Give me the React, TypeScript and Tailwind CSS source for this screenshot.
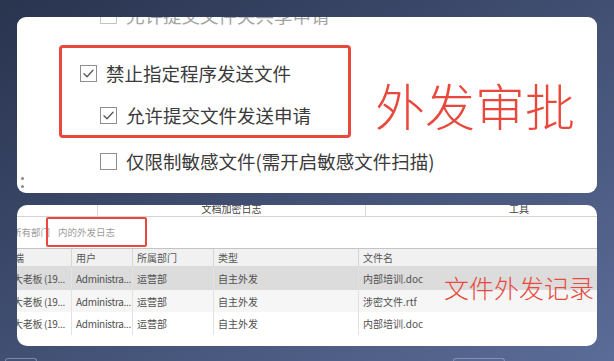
import React from 'react';

const Check: React.FC<{ checked?: boolean; light?: boolean }> = ({ checked, light }) => (
  <span
    className={`flex h-[17px] w-[17px] shrink-0 items-center justify-center border bg-white ${
      light ? 'border-[#c4c4c4]' : 'border-[#8e8e8e]'
    }`}
  >
    {checked && (
      <svg width="13" height="13" viewBox="0 0 13 13" fill="none">
        <path d="M2 6.8 L5 9.8 L11 3.2" stroke="#5c5c5c" strokeWidth="1.4" strokeLinecap="round" strokeLinejoin="round" />
      </svg>
    )}
  </span>
);

const OptionRow: React.FC<{ label: string; checked?: boolean; light?: boolean; className?: string }> = ({
  label,
  checked,
  light,
  className = '',
}) => (
  <div className={`flex h-[30px] items-center gap-[9px] ${className}`}>
    <Check checked={checked} light={light} />
    <span className={`whitespace-nowrap text-[18.5px] leading-none ${light ? 'text-[#a3a3a3]' : 'text-[#3b3b3b]'}`}>
      {label}
    </span>
  </div>
);

const rows = [
  { bg: 'bg-[#dcdcdc]', h: 'h-[23px]', file: '内部培训.doc' },
  { bg: 'bg-[#f6f6f6]', h: 'h-[22px]', file: '涉密文件.rtf' },
  { bg: 'bg-white', h: 'h-[23px]', file: '内部培训.doc' },
];

export default function App() {
  return (
    <div className="flex h-[361px] w-[614px] flex-col overflow-hidden bg-linear-to-br from-[#29344f] to-[#5b6c98] px-[17px] pt-[17px] font-['Noto_Sans_CJK_SC','Liberation_Sans',sans-serif]">
      {/* 外发审批 settings */}
      <div className="relative h-[176px] shrink-0 overflow-hidden rounded-[9px] bg-white">
        <div className="-mt-[17px] flex flex-col">
          <OptionRow label="允许提交文件夹共享申请" light className="h-[22px] pl-[83px]" />
          <div className="mt-[15px] flex items-start pl-[42px]">
            <div className="flex h-[93px] w-[292px] flex-col rounded-[4px] border-[3px] border-[#e8493c] pt-[10px]">
              <OptionRow label="禁止指定程序发送文件" checked className="pl-[18px]" />
              <OptionRow label="允许提交文件发送申请" checked className="mt-[12px] pl-[38px]" />
            </div>
            <span className="ml-[24px] mt-[34px] whitespace-nowrap text-[50px] font-light leading-none text-[#e8493c]">外发审批</span>
          </div>
          <OptionRow label="仅限制敏感文件(需开启敏感文件扫描)" className="mt-[8px] pl-[83px]" />
          <OptionRow label="(外发)Word文件" className="mt-[13px] pl-[83px]" />
        </div>
        <div className="absolute left-[4px] top-[160px] flex flex-col gap-[5px]">
          <span className="h-[3px] w-[3px] rounded-full bg-[#8a8a8a]" />
          <span className="h-[3px] w-[3px] rounded-full bg-[#8a8a8a]" />
        </div>
      </div>

      {/* 文件外发记录 log */}
      <div className="relative mt-[12px] h-[141px] shrink-0 overflow-hidden rounded-[10px] bg-white text-[10px]">
        <div className="flex h-[12px] overflow-hidden border-b border-[#d4d4d4] leading-[10px] text-[#444]">
          <div className="w-[81px] border-r border-[#dadada]" />
          <div className="-mt-[1px] w-[268px] border-r border-[#dadada] text-center">文档加密日志</div>
          <div className="-mt-[1px] pl-[143px]">工具</div>
        </div>
        <div className="relative flex h-[31px] items-center whitespace-nowrap text-[9.5px] text-[#9c9c9c]">
          <span className="-ml-[5px]">所有部门</span>
          <span className="ml-[8px]">内的外发日志</span>
          <div className="absolute left-[29px] top-0 h-[30px] w-[101px] rounded-[2px] border-2 border-[#e8493c]" />
        </div>
        <div className="flex h-[19px] items-center border-y border-t-[#c4c4c4] border-b-[#dadada] bg-[#f1f1f1] text-[#555]">
          <div className="h-full w-[55px] border-r border-[#d6d6d6] leading-[17px]"><span className="-ml-[3px]">端</span></div>
          <div className="h-full w-[61px] border-r border-[#d6d6d6] pl-[4px] leading-[17px]">用户</div>
          <div className="h-full w-[81px] border-r border-[#d6d6d6] pl-[4px] leading-[17px]">所属部门</div>
          <div className="h-full w-[145px] border-r border-[#d6d6d6] pl-[4px] leading-[17px]">类型</div>
          <div className="h-full flex-1 pl-[4px] leading-[17px]">文件名</div>
        </div>
        {rows.map((r, i) => (
          <div key={i} className={`flex ${r.h} items-center whitespace-nowrap text-[#505050] ${r.bg}`}>
            <div className="flex h-full w-[55px] items-center overflow-hidden border-r border-[#e2e2e2] tracking-[-0.3px]"><span className="-ml-[4px]">大老板 (19...</span></div>
            <div className="flex h-full w-[61px] items-center overflow-hidden border-r border-[#e2e2e2] pl-[4px] tracking-[-0.3px]">Administra...</div>
            <div className="flex h-full w-[81px] items-center border-r border-[#e2e2e2] pl-[4px]">运营部</div>
            <div className="flex h-full w-[145px] items-center border-r border-[#e2e2e2] pl-[4px]">自主外发</div>
            <div className="flex h-full flex-1 items-center pl-[4px]">{r.file}</div>
          </div>
        ))}
        <span className="absolute left-[427px] top-[70px] whitespace-nowrap text-[25px] font-light leading-none text-[#e8493c]">文件外发记录</span>
      </div>

      <div className="-mx-[17px] mt-[12px] flex">
        <span className="ml-[5px] h-[6px] w-[32px] rounded-t-[3px] border border-b-0 border-[#7d8aab]" />
        <span className="ml-[416px] h-[6px] w-[52px] rounded-t-[3px] border border-b-0 border-[#8290b2]" />
      </div>
    </div>
  );
}
